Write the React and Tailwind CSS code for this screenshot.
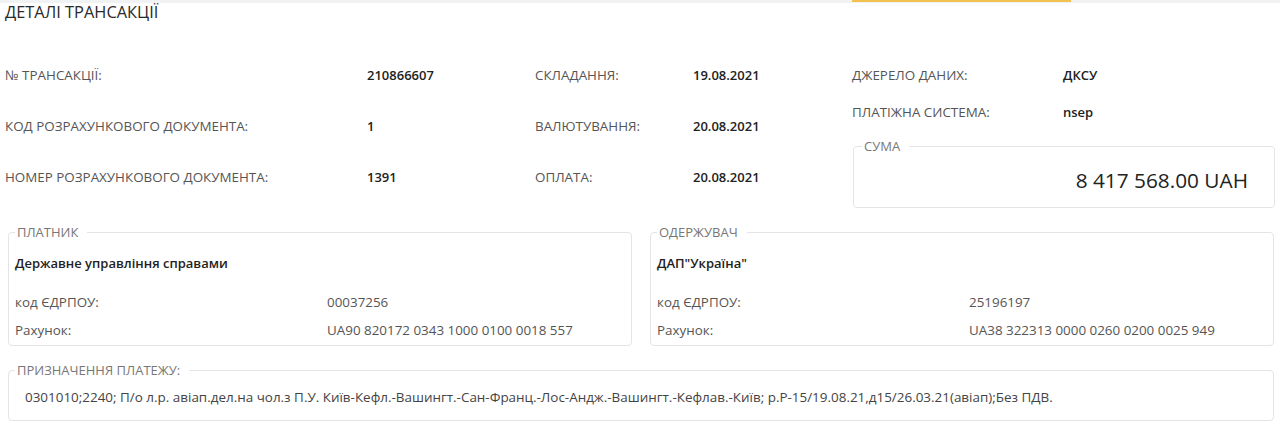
import React from 'react';

const topLeft = [
  ['№ ТРАНСАКЦІЇ:', '210866607', 'СКЛАДАННЯ:', '19.08.2021'],
  ['КОД РОЗРАХУНКОВОГО ДОКУМЕНТА:', '1', 'ВАЛЮТУВАННЯ:', '20.08.2021'],
  ['НОМЕР РОЗРАХУНКОВОГО ДОКУМЕНТА:', '1391', 'ОПЛАТА:', '20.08.2021'],
];

const Box = ({ title, className, children }) => (
  <fieldset className={`rounded-[4px] border border-[#e2e4e7] pl-[6px] pr-[6px] ${className}`}>
    <legend className="pl-[2px] pr-[9px] text-[13px] leading-[18px] text-[#777]">{title}</legend>
    {children}
  </fieldset>
);

const Party = ({ title, name, code, account }) => (
  <Box title={title} className="flex-1 pt-[13px] pb-[6px]">
    <div className="text-[13px] leading-[18px] font-semibold text-[#222]">{name}</div>
    <div className="mt-[21px] grid grid-cols-[312px_1fr] gap-y-[10px] text-[13.4px] leading-[18px] text-[#555]">
      <span>код ЄДРПОУ:</span>
      <span>{code}</span>
      <span>Рахунок:</span>
      <span>{account}</span>
    </div>
  </Box>
);

export default function App() {
  return (
    <div className="relative w-[1280px] h-[429px] bg-white overflow-hidden font-['Open_Sans','Noto_Sans',sans-serif] text-[#333]">
      {/* top strip */}
      <div className="absolute left-0 top-0 h-[3px] w-full bg-[#f1f2f4]" />
      <div className="absolute left-[852px] top-0 h-[2px] w-[219px] bg-[#f3c14f]" />

      <div className="pl-[5px] pr-[5px]">
        <h1 className="text-[16.4px] leading-[24px] font-medium text-[#2a2a2a]">ДЕТАЛІ ТРАНСАКЦІЇ</h1>

        <div className="mt-[26px] flex items-start">
          <div className="grid grid-cols-[362px_168px_158px_159px]">
            {topLeft.map((r, i) => (
              <React.Fragment key={i}>
                <div className="h-[51px] flex items-center text-[13.4px] text-[#555]">{r[0]}</div>
                <div className="h-[51px] flex items-center text-[13px] font-semibold text-[#222]">{r[1]}</div>
                <div className="h-[51px] flex items-center text-[13.4px] text-[#555]">{r[2]}</div>
                <div className="h-[51px] flex items-center text-[13px] font-semibold text-[#222]">{r[3]}</div>
              </React.Fragment>
            ))}
          </div>

          <div className="flex-1 pt-[7px]">
            <div className="h-[37px] flex items-center">
              <span className="w-[211px] text-[13.4px] text-[#555]">ДЖЕРЕЛО ДАНИХ:</span>
              <span className="text-[13px] font-semibold text-[#222]">ДКСУ</span>
            </div>
            <div className="h-[37px] flex items-center">
              <span className="w-[211px] text-[13.4px] text-[#555]">ПЛАТІЖНА СИСТЕМА:</span>
              <span className="text-[13px] font-semibold text-[#222]">nsep</span>
            </div>
            <Box title="СУМА" className="mt-[6px] ml-[1px] pl-[8px] pr-[26px] pt-[11px] pb-[13px]">
              <div className="text-right text-[20.8px] leading-[28px] text-[#222]">8 417 568.00 UAH</div>
            </Box>
          </div>
        </div>

        <div className="mt-[15px] ml-[3px] mr-[1px] flex gap-[18px]">
          <Party title="ПЛАТНИК" name="Державне управління справами" code="00037256" account="UA90 820172 0343 1000 0100 0018 557" />
          <Party title="ОДЕРЖУВАЧ" name={'ДАП"Україна"'} code="25196197" account="UA38 322313 0000 0260 0200 0025 949" />
        </div>

        <Box title="ПРИЗНАЧЕННЯ ПЛАТЕЖУ:" className="mt-[15px] ml-[3px] mr-[1px] pt-[9px] pb-[14px]">
          <div className="pl-[10px] text-[13.45px] leading-[18px] text-[#444]">
            0301010;2240; П/о л.р. авіап.дел.на чол.з П.У. Київ-Кефл.-Вашингт.-Сан-Франц.-Лос-Андж.-Вашингт.-Кефлав.-Київ; р.Р-15/19.08.21,д15/26.03.21(авіап);Без ПДВ.
          </div>
        </Box>
      </div>
    </div>
  );
}
